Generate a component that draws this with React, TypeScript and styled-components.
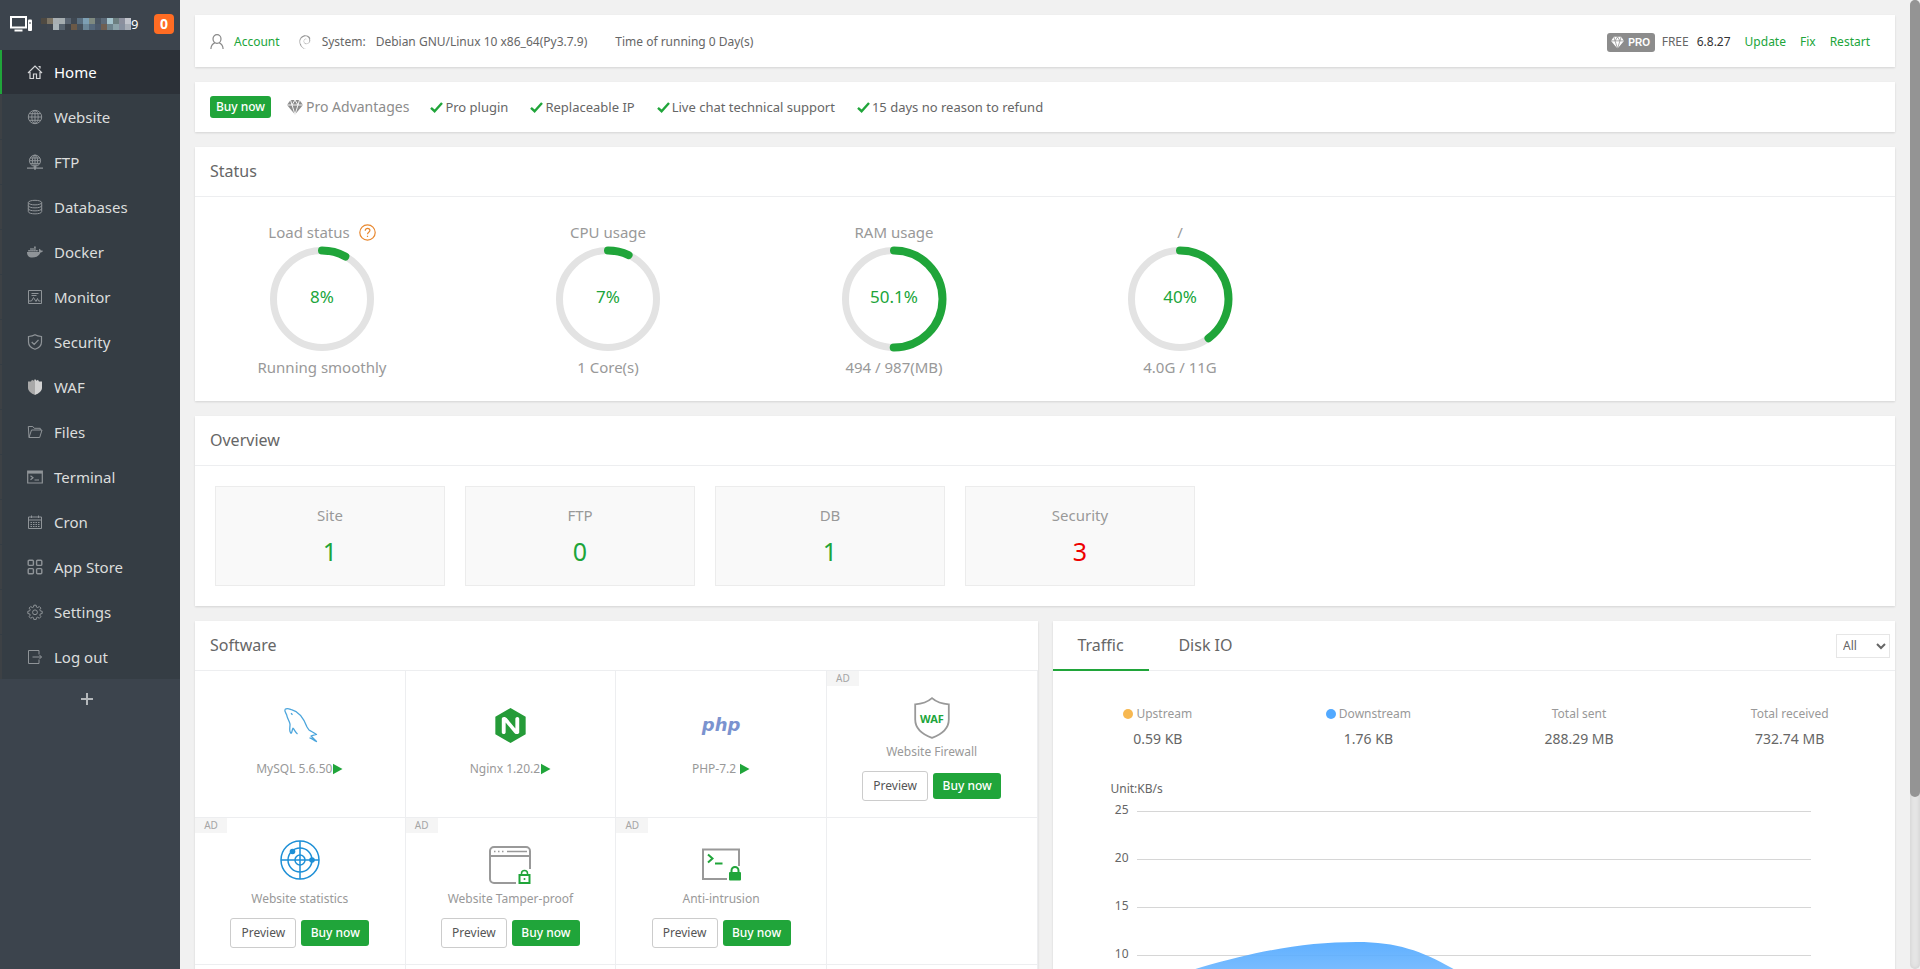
import React from "react";
import styled, { createGlobalStyle } from "styled-components";
import { FaDocker } from "react-icons/fa";
import { SiDebian, SiNginx } from "react-icons/si";

const GREEN = "#20a53a";
const LINE = "#edeef0";

const GlobalStyle = createGlobalStyle`
  *, *::before, *::after { box-sizing: border-box; }
  body {
    margin: 0;
    background: #f1f1f1;
    color: #666;
    font: 12px/20px "Noto Sans", "Open Sans", sans-serif;
  }
  button, select { font: inherit; }
  h2, p, ul { margin: 0; padding: 0; }
  ul { list-style: none; }
  a { text-decoration: none; color: ${GREEN}; }
`;

const Shell = styled.div`
  display: grid;
  grid-template-columns: 180px minmax(0, 1fr);
  height: 100vh;
  overflow: hidden;
`;

/* ---------- sidebar ---------- */

const Sidebar = styled.aside`
  background: #3c444d;
  display: flex;
  flex-direction: column;
  overflow: hidden;
`;

const HostBar = styled.header`
  display: flex;
  align-items: center;
  height: 50px;
  padding: 0 6px 2px 9px;
  color: #fff;
`;

const HostName = styled.span`
  display: flex;
  align-items: center;
  margin-left: 8px;
  flex: 1;
  font-size: 13px;
`;

const MessageCount = styled.button`
  width: 20px;
  height: 20px;
  padding: 0;
  border: 0;
  border-radius: 4px;
  background: #ff6c23;
  color: #fff;
  font: bold 14px/20px "Noto Sans", sans-serif;
`;

const Menu = styled.ul`
  display: grid;
  gap: 1px;
  background: #353d44;
`;

const MenuLink = styled.a<{ $active?: boolean }>`
  display: flex;
  align-items: center;
  gap: 11px;
  height: 44px;
  padding-left: 25px;
  border-left: 2px solid ${(p) => (p.$active ? GREEN : "#3d4145")};
  background: ${(p) => (p.$active ? "#2c3138" : "transparent")};
  color: ${(p) => (p.$active ? "#fff" : "#dcdddd")};
  font-size: 15px;
  svg { color: ${(p) => (p.$active ? "#d5d6d8" : "#8f9498")}; }
`;

const AddItem = styled.button`
  height: 44px;
  padding: 0 6px 0 0;
  border: 0;
  background: none;
  color: #b4b8bb;
`;

/* ---------- main column ---------- */

const Main = styled.main`
  display: flex;
  flex-direction: column;
  gap: 15px;
  padding: 15px 25px 15px 15px;
  overflow-y: auto;
  scrollbar-width: none;
`;

const ScrollTrack = styled.div`
  position: fixed;
  top: 0;
  right: 0;
  bottom: 0;
  width: 10px;
  border-radius: 5px;
  background: #e5e5e5;
  box-shadow: inset 0 0 4px #ccc;
`;

const ScrollThumb = styled.div`
  height: 82.2%;
  border-radius: 5px;
  background: #949494;
`;

const Card = styled.section`
  flex: none;
  background: #fff;
  box-shadow: 0 1px 2px rgba(0, 0, 0, 0.12);
`;

const InfoBar = styled(Card)`
  display: flex;
  align-items: center;
  height: 52px;
  padding: 2px 25px 0 15px;
`;

const InfoItem = styled.span<{ $gap?: number }>`
  display: flex;
  align-items: center;
  gap: 10px;
  margin-right: ${(p) => p.$gap ?? 0}px;
`;

const VersionArea = styled.div`
  display: flex;
  align-items: center;
  gap: 14px;
  margin-left: auto;
`;

const License = styled.span`
  display: flex;
  align-items: center;
  gap: 7px;
`;

const Version = styled.span`
  color: #333;
  margin-left: -6px;
`;

const ProBadge = styled.span`
  display: flex;
  align-items: center;
  justify-content: center;
  gap: 4px;
  width: 48px;
  height: 19px;
  border-radius: 3px;
  background: #8c8c8c;
  color: #fff;
  font: bold 10px/19px "Liberation Sans", sans-serif;
`;

const ProBar = styled(Card)`
  display: flex;
  align-items: center;
  height: 50px;
  padding: 0 15px;
  font-size: 13px;
`;

const ProTitle = styled.span`
  display: flex;
  align-items: center;
  gap: 3px;
  margin: 0 21px 0 16px;
  color: #8c8c8c;
  font-size: 14px;
`;

const Perk = styled.span`
  display: flex;
  align-items: center;
  gap: 2px;
  margin-right: 22px;
`;

const SolidButton = styled.button<{ $small?: boolean }>`
  height: ${(p) => (p.$small ? 22 : 26)}px;
  width: ${(p) => (p.$small ? 61 : 68)}px;
  padding: 0;
  border: 0;
  border-radius: 3px;
  background: ${GREEN};
  color: #fff;
  font-size: 12px;
  font-weight: 500;
  white-space: nowrap;
`;

const OutlineButton = styled.button`
  width: 66px;
  height: 30px;
  padding: 0;
  border: 1px solid #ccc;
  border-radius: 3px;
  background: #fff;
  color: #555;
  font-size: 12px;
`;

const CardTitle = styled.h2`
  height: 50px;
  padding-left: 15px;
  border-bottom: 1px solid ${LINE};
  font-size: 16px;
  font-weight: 400;
  line-height: 49px;
`;

/* ---------- status gauges ---------- */

const Gauges = styled.div`
  display: grid;
  grid-template-columns: repeat(6, 1fr);
  margin-left: -16px;
  padding: 24px 0;
`;

const Gauge = styled.div`
  display: grid;
  justify-items: center;
  color: #999;
  font-size: 15px;
`;

const GaugeLabel = styled.p`
  display: flex;
  align-items: center;
  gap: 9px;
  height: 22px;
`;

const Dial = styled.div`
  display: grid;
  place-items: center;
  width: 106px;
  height: 106px;
  margin: 3px 0 5px;
  color: ${GREEN};
  font-size: 17px;
  > * { grid-area: 1 / 1; }
`;

const DialValue = styled.span`
  padding-bottom: 4px;
`;

/* ---------- overview ---------- */

const Tiles = styled.div`
  display: grid;
  grid-template-columns: repeat(4, 230px);
  gap: 20px;
  padding: 20px;
`;

const Tile = styled.a<{ $alert?: boolean }>`
  display: grid;
  align-content: center;
  justify-items: center;
  gap: 10px;
  height: 100px;
  border: 1px solid #ececec;
  background: #f9f9f9;
  color: #999;
  font-size: 15px;
  strong {
    color: ${(p) => (p.$alert ? "#ee0000" : GREEN)};
    font-size: 25px;
    font-weight: 400;
    line-height: 32px;
  }
`;

/* ---------- lower panels ---------- */

const Columns = styled.div`
  display: grid;
  grid-template-columns: repeat(2, minmax(0, 1fr));
  gap: 15px;
  flex: none;
`;

const AppGrid = styled.div`
  display: grid;
  grid-template-columns: repeat(4, 1fr);
`;

const AppCell = styled.article`
  position: relative;
  display: flex;
  flex-direction: column;
  align-items: center;
  height: 147px;
  border: solid ${LINE};
  border-width: 0 1px 1px 0;
  color: #999;
`;

const AppLogo = styled.div<{ $promo?: boolean }>`
  display: flex;
  align-items: center;
  justify-content: center;
  height: 46px;
  margin: ${(p) => (p.$promo ? "24px 0 1px" : "31px 0 11px")};
`;

const AppName = styled.p`
  display: flex;
  align-items: center;
  gap: 1px;
`;

const AppActions = styled.div`
  display: flex;
  align-items: center;
  gap: 5px;
  margin-top: 9px;
`;

const AdTag = styled.span`
  position: absolute;
  top: 0;
  left: 0;
  width: 32px;
  height: 15px;
  background: #f5f5f5;
  color: #a5a5a5;
  font-size: 10px;
  line-height: 15px;
  text-align: center;
`;

const PhpLogo = styled.span`
  color: #7b93cf;
  font: italic bold 18px/24px "DejaVu Sans", sans-serif;
`;

const TabBar = styled.div`
  display: flex;
  align-items: center;
  height: 50px;
  padding-right: 5px;
  border-bottom: 1px solid ${LINE};
`;

const Tab = styled.button<{ $active?: boolean }>`
  height: 50px;
  padding: 0 0 1px;
  width: ${(p) => (p.$active ? 96 : 114)}px;
  border: 0;
  background: none;
  box-shadow: ${(p) => (p.$active ? `inset 0 -2px ${GREEN}` : "none")};
  color: #666;
  font-size: 16px;
`;

const NicSelect = styled.select`
  width: 54px;
  height: 24px;
  margin-left: auto;
  padding: 0 2px;
  border: 1px solid #e6e6e6;
  background: #fff;
  color: #666;
`;

const Stats = styled.div`
  display: grid;
  grid-template-columns: repeat(4, 1fr);
  padding-top: 33px;
`;

const Stat = styled.div`
  display: grid;
  justify-items: center;
  gap: 4px;
  color: #999;
  strong {
    color: #666;
    font-size: 14px;
    font-weight: 400;
    line-height: 22px;
  }
`;

const StatLabel = styled.p`
  display: flex;
  align-items: center;
  gap: 3px;
`;

const Dot = styled.i<{ $color: string }>`
  width: 10px;
  height: 10px;
  border-radius: 50%;
  background: ${(p) => p.$color};
`;

const Chart = styled.div`
  display: grid;
  grid-template-columns: 76px minmax(0, 1fr);
  column-gap: 8px;
  padding: 29px 84px 64px 0;
`;

const ChartUnit = styled.p`
  grid-column: 1 / 3;
  padding-left: 58px;
  margin-bottom: 1px;
`;

const AxisLabel = styled.span`
  display: block;
  height: 48px;
  text-align: right;
`;

const Plot = styled.svg`
  display: block;
  width: 100%;
  height: 264px;
`;

/* ---------- drawings ---------- */

const thin = {
  width: 16,
  height: 16,
  viewBox: "0 0 16 16",
  fill: "none",
  stroke: "currentColor",
  strokeWidth: 1,
} as const;

const icons: Record<string, React.ReactNode> = {
  Home: (
    <svg {...thin} strokeWidth={1.2}>
      <path d="M1 9 8 2l7 7M3 8v6.5h3.5V10h3v4.5H13V8M11.5 2.5H13v2" />
    </svg>
  ),
  Website: (
    <svg {...thin}>
      <circle cx="8" cy="8" r="6.7" />
      <ellipse cx="8" cy="8" rx="3.2" ry="6.7" />
      <path d="M8 1.3v13.4M1.3 8h13.4M2.3 4.7h11.4M2.3 11.3h11.4" />
    </svg>
  ),
  FTP: (
    <svg {...thin}>
      <circle cx="8" cy="6.7" r="5.6" />
      <ellipse cx="8" cy="6.7" rx="2.6" ry="5.6" />
      <path d="M8 1v11.3M2.4 6.7h11.2M3 4h10M3 9.4h10M8 12v2" />
      <path d="M0 14.2h6M10 14.2h6" strokeWidth="1.3" />
      <circle cx="8" cy="14" r="1.3" fill="currentColor" />
    </svg>
  ),
  Databases: (
    <svg {...thin}>
      <ellipse cx="8" cy="3.6" rx="6.7" ry="2.3" />
      <path d="M1.3 3.6v9c0 3 13.4 3 13.4 0v-9M1.3 6.6c0 3 13.4 3 13.4 0M1.3 9.6c0 3 13.4 3 13.4 0" />
    </svg>
  ),
  Docker: <FaDocker size={16} />,
  Monitor: (
    <svg {...thin}>
      <path d="M1.5 1.5h13v13h-13zM4.5 4.5h7M4.5 6.5h5M2 12h2.5l2-3.5 2.5 4 1.5-3 1 2.5h2" />
    </svg>
  ),
  Security: (
    <svg {...thin} strokeWidth={1.2}>
      <path d="M8 .8c2 1.3 4.3 1.6 6.5 1.7V8c0 3.6-2.6 6-6.5 7.3C4.1 14 1.5 11.6 1.5 8V2.5C3.7 2.4 6 2.1 8 .8zM4.7 8l2.5 2.5 4.3-4.7" />
    </svg>
  ),
  WAF: (
    <svg {...thin} stroke="none">
      <path d="M8 0 6.5 1.8 5 .8 4 2.6H1v6.2C1 12 4 14.5 8 16z" fill="#a9a9a9" />
      <path d="m8 0 1.5 1.8L11 .8l1 1.8h3v6.2c0 3.2-3 5.7-7 7.2z" fill="#d2d2d2" />
    </svg>
  ),
  Files: (
    <svg {...thin}>
      <path d="M2 13.5 1.3 2.5h4.5L7.3 4.3h6V6M2 13.5h10.7L15 6H4.5z" />
    </svg>
  ),
  Terminal: (
    <svg {...thin} strokeWidth={1.2}>
      <path d="M.7 2h14.6v12H.7z" />
      <path d="M.7 3.3h14.6" strokeWidth="2.6" />
      <path d="m3.5 6.7 2.5 2-2.5 2M7.5 11H12" />
    </svg>
  ),
  Cron: (
    <svg {...thin}>
      <path d="M1.5 3h13v11.5h-13zM1.5 6h13M4.5 1.5V4M11.5 1.5V4" />
      <path d="M3.5 8.5h9M3.5 10.5h9M3.5 12.5h9" strokeDasharray="1.5 1" />
    </svg>
  ),
  "App Store": (
    <svg {...thin} strokeWidth={1.4}>
      <rect x="1.2" y="1.2" width="5.2" height="5.2" rx="1" />
      <rect x="9.6" y="1.2" width="5.2" height="5.2" rx="1" />
      <rect x="1.2" y="9.6" width="5.2" height="5.2" rx="1" />
      <rect x="9.6" y="9.6" width="5.2" height="5.2" rx="1" />
    </svg>
  ),
  Settings: (
    <svg {...thin}>
      <path d="M6.9 1.2h2.2l.4 1.9 1.2.5 1.6-1.1 1.6 1.6-1.1 1.6.5 1.2 1.9.4v2.2l-1.9.4-.5 1.2 1.1 1.6-1.6 1.6-1.6-1.1-1.2.5-.4 1.9H6.9l-.4-1.9-1.2-.5-1.6 1.1-1.6-1.6 1.1-1.6-.5-1.2-1.9-.4V7.3l1.9-.4.5-1.2-1.1-1.6 1.6-1.6 1.6 1.1 1.2-.5z" />
      <circle cx="8" cy="8.3" r="2.4" />
    </svg>
  ),
  "Log out": (
    <svg {...thin}>
      <path d="M12 5V1.5H1.5v13H12V11M5.5 8h9M12 5.5 14.5 8 12 10.5" />
    </svg>
  ),
};

const HostIcon = () => (
  <svg width="24" height="18" viewBox="0 0 24 18" fill="none" stroke="#fff">
    <path d="M2 2h15v10.5H2z" strokeWidth="2" />
    <path d="M5.5 15.5h8" strokeWidth="2" />
    <rect x="19" y="4.5" width="4" height="11.5" rx="1" fill="#fff" stroke="none" />
    <path d="M21 7v2" stroke="#3c444d" />
  </svg>
);

const mosaic = [
  ["#4f4a42", "#7d7565", "#a8afb3", "#a5adb0", "#596471", "#3f4852", "#5a6f80", "#7ea0b4", "#7f8a80", "#4a5663", "#5c6a78", "#a3c3cc", "#6d7f80", "#8b8f9d", "#c1c4cc"],
  ["#3c444d", "#3f464f", "#aab4b9", "#57636f", "#3c444d", "#6b5947", "#46515c", "#6c8798", "#56697c", "#4c5a6b", "#6f5f52", "#6d838c", "#8ca3a9", "#87909f", "#a7adb6"],
];

const Mosaic = () => (
  <svg width="90" height="12" viewBox="0 0 90 12" shapeRendering="crispEdges" aria-hidden="true">
    {mosaic.map((row, y) =>
      row.map((fill, x) => <rect key={`${x}-${y}`} x={x * 6} y={y * 6} width="6" height="6" fill={fill} />)
    )}
  </svg>
);

const UserIcon = () => (
  <svg width="14" height="16" viewBox="0 0 14 16" fill="none" stroke="#888" strokeWidth="1.2">
    <ellipse cx="7" cy="5" rx="4" ry="4.3" />
    <path d="M5 8.7C2.5 9.7 1 12 .9 15M9 8.7c2.5 1 4 3.3 4.1 6.3" />
  </svg>
);

const Gem = ({ size, line }: { size: number; line: string }) => (
  <svg width={size} height={size} viewBox="0 0 16 16" fill="currentColor">
    <path d="M3.5 1h9L16 6l-8 9.5L0 6z" />
    <path d="M0 6h16M3.5 1 5 6l3 9.5L11 6l1.5-5M5 6l3-5 3 5" fill="none" stroke={line} strokeWidth=".9" />
  </svg>
);

const Check = () => (
  <svg width="13" height="11" viewBox="0 0 13 11" fill="none" stroke={GREEN} strokeWidth="2.4">
    <path d="m1 5.8 3.6 3.4L12 1" />
  </svg>
);

const Play = () => (
  <svg width="10" height="12" viewBox="0 0 10 12" fill={GREEN}>
    <path d="M0 .7v10.6L9.5 6z" />
  </svg>
);

const HelpIcon = () => (
  <svg width="17" height="17" viewBox="0 0 17 17" fill="none" stroke="#e8882f" strokeWidth="1.2">
    <circle cx="8.5" cy="8.5" r="7.7" />
    <path d="M6.2 6.8c0-3.2 4.7-3 4.7-.2 0 1.7-2.4 1.7-2.4 3.7M8.5 11.7v1.4" />
  </svg>
);

const Ring = ({ value }: { value: number }) => (
  <svg width="106" height="106" viewBox="0 0 106 106" fill="none" transform="rotate(-90)">
    <circle cx="53" cy="53" r="48.5" stroke="#e3e3e3" strokeWidth="7" />
    <circle
      cx="53" cy="53" r="48.5" stroke={GREEN} strokeWidth="8" strokeLinecap="round"
      pathLength="100" strokeDasharray={`${value} 100`}
    />
  </svg>
);

const MysqlLogo = () => (
  <svg width="36" height="36" viewBox="0 0 36 36" fill="none" stroke="#4ba5dc" strokeWidth="1.3" strokeLinejoin="round">
    <path d="M3 2.5C5 .5 7.5 2 9.5 2.7c7 1.8 12 8.3 15.5 17.3l2 3c2.5 1.5 5.5 3 7.5 4.5-2 .7-4 .8-5.5 1.5l2.5 2.5 3 3c-2.5-1-5-3.5-7-3.7" />
    <path d="M3 2.5c-.8 1.7 1 3.5 1.7 5.5C5 11 7.5 14 8 17c.3 3-1.5 7 1 9.3 1.5-1.3 1-4 2-5 1.3 1 2.5 4.3 4.5 5.7M9 6.3l1.5 1.5" />
  </svg>
);

const WafLogo = () => (
  <svg width="36" height="42" viewBox="0 0 36 42">
    <path d="M18 1.2c4.5 4 9.5 5.8 16.8 6.1v15.2c0 8.5-6.3 14.5-16.8 18.3C7.5 37 1.2 31 1.2 22.5V7.3C8.5 7 13.5 5.2 18 1.2z" fill="#fff" stroke="#999" strokeWidth="1.8" />
    <text x="18" y="25.5" textAnchor="middle" fill={GREEN} fontFamily="Noto Sans, sans-serif" fontWeight="bold" fontSize="11">WAF</text>
  </svg>
);

const RadarLogo = () => (
  <svg width="40" height="50" viewBox="0 0 40 50" fill="none" stroke="#1d8fd6" strokeWidth="1.5">
    <circle cx="20" cy="20" r="19" />
    <circle cx="20" cy="20" r="12" />
    <circle cx="20" cy="20" r="5" />
    <path d="M20 1v38M1 20h38" />
    <circle cx="12.5" cy="11.5" r="2.8" fill="#1d8fd6" stroke="none" />
    <circle cx="32" cy="20" r="2.8" fill="#1d8fd6" stroke="none" />
  </svg>
);

const TamperLogo = () => (
  <svg width="44" height="46" viewBox="0 0 44 46" fill="none" stroke="#999" strokeWidth="2">
    <path d="M28 41H6a4 4 0 0 1-4-4V9a4 4 0 0 1 4-4h32a4 4 0 0 1 4 4v18M2 14h40" />
    <path d="M6 9.5h11" strokeDasharray="1.5 2.5" strokeWidth="1.5" />
    <path d="M19 9.5h20" strokeWidth="1.5" />
    <rect x="31.5" y="33" width="10" height="8" stroke={GREEN} />
    <path d="M33.5 33v-1.5a3 3 0 0 1 6 0V33" stroke={GREEN} strokeWidth="1.5" />
    <circle cx="36.5" cy="37" r="1" fill={GREEN} stroke="none" />
  </svg>
);

const IntrusionLogo = () => (
  <svg width="40" height="44" viewBox="0 0 40 44" fill="none" stroke="#999" strokeWidth="2">
    <path d="M26 36H2V6.5h36V23" />
    <path d="m7 11.5 4.5 4-4.5 4M14 20.500h7.500" stroke={GREEN} />
    <rect x="28" y="29" width="12" height="8.5" rx="1" fill={GREEN} stroke="none" />
    <path d="M30.5 30v-2.500a3.500 3.500 0 0 1 7 0V30" stroke={GREEN} />
  </svg>
);

const gauges = [
  { label: "Load status", value: 8, note: "Running smoothly", help: true },
  { label: "CPU usage", value: 7, note: "1 Core(s)" },
  { label: "RAM usage", value: 50.1, note: "494 / 987(MB)" },
  { label: "/", value: 40, note: "4.0G / 11G" },
];

const tiles = [
  { label: "Site", count: 1 },
  { label: "FTP", count: 0 },
  { label: "DB", count: 1 },
  { label: "Security", count: 3, alert: true },
];

type App = { name: string; logo: React.ReactNode; promo?: boolean };

const apps: (App | null)[] = [
  { name: "MySQL 5.6.50", logo: <MysqlLogo /> },
  { name: "Nginx 1.20.2", logo: <SiNginx size={35} color="#259b38" /> },
  { name: "PHP-7.2\u00a0", logo: <PhpLogo>php</PhpLogo> },
  { name: "Website Firewall", logo: <WafLogo />, promo: true },
  { name: "Website statistics", logo: <RadarLogo />, promo: true },
  { name: "Website Tamper-proof", logo: <TamperLogo />, promo: true },
  { name: "Anti-intrusion", logo: <IntrusionLogo />, promo: true },
  null,
  null,
  null,
  null,
  null,
];

const perks = ["Pro plugin", "Replaceable IP", "Live chat technical support", "15 days no reason to refund"];

const stats = [
  { label: "Upstream", value: "0.59 KB", color: "#f7b851" },
  { label: "Downstream", value: "1.76 KB", color: "#52a9ff" },
  { label: "Total sent", value: "288.29 MB" },
  { label: "Total received", value: "732.74 MB" },
];

export default function App() {
  return (
    <Shell>
      <GlobalStyle />
      <Sidebar>
        <HostBar>
          <HostIcon />
          <HostName><Mosaic />9</HostName>
          <MessageCount>0</MessageCount>
        </HostBar>
        <nav>
          <Menu>
            {Object.entries(icons).map(([name, icon]) => (
              <li key={name}>
                <MenuLink href="#" $active={name === "Home"}>{icon}{name}</MenuLink>
              </li>
            ))}
          </Menu>
        </nav>
        <AddItem aria-label="Add menu item">
          <svg width="12" height="12" viewBox="0 0 12 12" stroke="currentColor" strokeWidth="2">
            <path d="M6 0v12M0 6h12" />
          </svg>
        </AddItem>
      </Sidebar>

      <Main>
        <InfoBar>
          <InfoItem $gap={18}>
            <UserIcon />
            <a href="#">Account</a>
          </InfoItem>
          <InfoItem $gap={28}>
            <SiDebian size={14} color="#999" />
            <span>System:</span>
            <span>Debian GNU/Linux 10 x86_64(Py3.7.9)</span>
          </InfoItem>
          <span>Time of running 0 Day(s)</span>
          <VersionArea>
            <License>
              <ProBadge><Gem size={13} line="#8c8c8c" />PRO</ProBadge>
              FREE
            </License>
            <Version>6.8.27</Version>
            <a href="#">Update</a>
            <a href="#">Fix</a>
            <a href="#">Restart</a>
          </VersionArea>
        </InfoBar>

        <ProBar>
          <SolidButton $small>Buy now</SolidButton>
          <ProTitle><Gem size={16} line="#fff" />Pro Advantages</ProTitle>
          {perks.map((perk) => (
            <Perk key={perk}><Check />{perk}</Perk>
          ))}
        </ProBar>

        <Card>
          <CardTitle>Status</CardTitle>
          <Gauges>
            {gauges.map((g) => (
              <Gauge key={g.label}>
                <GaugeLabel>{g.label}{g.help && <HelpIcon />}</GaugeLabel>
                <Dial>
                  <Ring value={g.value} />
                  <DialValue>{g.value}%</DialValue>
                </Dial>
                <p>{g.note}</p>
              </Gauge>
            ))}
          </Gauges>
        </Card>

        <Card>
          <CardTitle>Overview</CardTitle>
          <Tiles>
            {tiles.map((t) => (
              <Tile key={t.label} href="#" $alert={t.alert}>
                {t.label}
                <strong>{t.count}</strong>
              </Tile>
            ))}
          </Tiles>
        </Card>

        <Columns>
          <Card>
            <CardTitle>Software</CardTitle>
            <AppGrid>
              {apps.map((app, i) => (
                <AppCell key={i}>
                  {app && (
                    <>
                      {app.promo && <AdTag>AD</AdTag>}
                      <AppLogo $promo={app.promo}>{app.logo}</AppLogo>
                      <AppName>{app.name}{!app.promo && <Play />}</AppName>
                      {app.promo && (
                        <AppActions>
                          <OutlineButton>Preview</OutlineButton>
                          <SolidButton>Buy now</SolidButton>
                        </AppActions>
                      )}
                    </>
                  )}
                </AppCell>
              ))}
            </AppGrid>
          </Card>

          <Card>
            <TabBar>
              <Tab $active>Traffic</Tab>
              <Tab>Disk IO</Tab>
              <NicSelect aria-label="Network interface" defaultValue="All">
                <option>All</option>
              </NicSelect>
            </TabBar>
            <Stats>
              {stats.map((s) => (
                <Stat key={s.label}>
                  <StatLabel>{s.color && <Dot $color={s.color} />}{s.label}</StatLabel>
                  <strong>{s.value}</strong>
                </Stat>
              ))}
            </Stats>
            <Chart>
              <ChartUnit>Unit:KB/s</ChartUnit>
              <div>
                {[25, 20, 15, 10].map((n) => <AxisLabel key={n}>{n}</AxisLabel>)}
              </div>
              <Plot viewBox="0 0 675 264" preserveAspectRatio="none">
                <defs>
                  <linearGradient id="down" x1="0" y1="0" x2="0" y2="1">
                    <stop offset="0" stopColor="#52a9ff" stopOpacity=".92" />
                    <stop offset="1" stopColor="#a8d4ff" stopOpacity=".8" />
                  </linearGradient>
                </defs>
                {[0, 1, 2, 3, 4, 5].map((i) => (
                  <rect key={i} y={11 + i * 48} width="675" height="1" fill="#d6d6d6" />
                ))}
                <path d="M0 190C25 180 45 173 65 167C125 150 170 142 220 142C260 142 285 151 315 168C350 188 390 220 440 236C520 246 600 240 675 244V252H0z" fill="url(#down)" />
              </Plot>
            </Chart>
          </Card>
        </Columns>
      </Main>
      <ScrollTrack><ScrollThumb /></ScrollTrack>
    </Shell>
  );
}
